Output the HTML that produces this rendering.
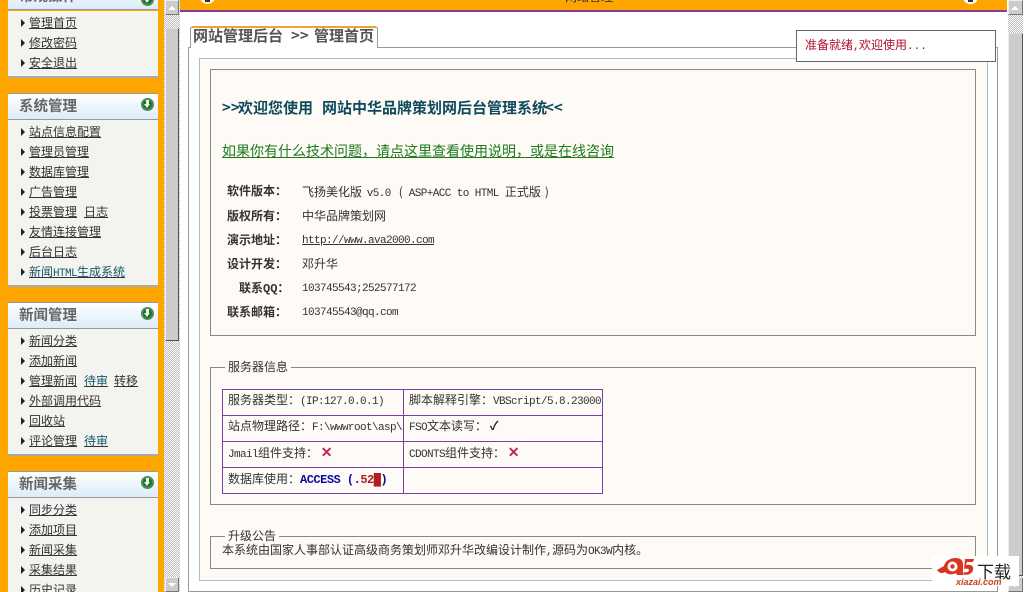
<!DOCTYPE html>
<html><head><meta charset="utf-8"><style>
*{box-sizing:border-box}
html,body{margin:0;padding:0;width:1024px;height:592px;overflow:hidden;background:#fff}
body{position:relative;font:12px/14px "WenQuanYi Zen Hei","Noto Sans CJK SC",sans-serif;color:#333}
.a{position:absolute;white-space:nowrap}
.box{position:absolute}
.h{position:absolute;left:8px;width:150px;height:27px;background:linear-gradient(#fff,#dcecf8);border:1px solid #999;border-width:1px 0 1px 0;font-size:14.5px;font-weight:bold;color:#666;padding:4px 0 0 11px;line-height:16px}
.p{position:absolute;left:8px;width:150px;background:#f3f3ef;border-bottom:2px solid #aaa}
.i{position:absolute;left:29px;text-decoration:underline;color:#333;white-space:nowrap;font-size:12px}
.i b{font-weight:normal;color:#135a6a}
.t{position:absolute;left:21px;width:0;height:0;border-left:4px solid #222;border-top:4px solid transparent;border-bottom:4px solid transparent}
.g{position:absolute;left:141px;width:13px;height:13px;border-radius:50%;background:#1f6f2a;border:2px solid #4f8a58}
.g:before{content:"";position:absolute;left:3px;top:0;width:3px;height:4px;background:#e4f7de}
.g:after{content:"";position:absolute;left:1px;top:4px;width:0;height:0;border-left:3.5px solid transparent;border-right:3.5px solid transparent;border-top:4px solid #e4f7de}
.dith{position:absolute;background-color:#fff;background-image:repeating-conic-gradient(#bbb 0 25%,#fff 0 50%);background-size:2px 2px}
.thumb{position:absolute;background:#ccc;border:1px solid #555;border-top-color:#ddd;border-left-color:#eee}
.btn{position:absolute;background:#ccc;border:1px solid #777;border-top-color:#eee;border-left-color:#eee}
.btn i{position:absolute;left:2px;width:0;height:0;border-left:4px solid transparent;border-right:4px solid transparent}
.l{font-weight:bold;color:#333}
.m{font-family:"Liberation Mono",monospace;font-size:11px;letter-spacing:-.6px}
.mono{font-family:"Liberation Mono","WenQuanYi Zen Hei",monospace;font-size:11px;letter-spacing:-.6px}
td{border:1px solid #7a3fa8;padding:0 0 3px 5px;height:26px;white-space:nowrap;overflow:hidden;font-size:12px;color:#333}
</style></head><body>
<div class="box" style="left:0;top:0;width:164px;height:592px;background:#ffa500"></div>
<div class="box" style="left:179px;top:0;width:828px;height:10px;background:#ffa500"></div>
<div class="box" style="left:179px;top:10px;width:828px;height:2px;background:#8a3a9a"></div>
<div class="box" style="left:200px;top:-9px;width:15px;height:13px;border-radius:50%;background:#fff6cc"></div>
<div class="box" style="left:205px;top:-2px;width:5px;height:4px;background:#333"></div>
<div class="box" style="left:963px;top:-9px;width:15px;height:13px;border-radius:50%;background:#fff"></div>
<div class="box" style="left:968px;top:-2px;width:5px;height:4px;background:#333"></div>
<div class="a" style="left:565px;top:-10px;color:#333">网站管理</div>

<div class="dith" style="left:164px;top:0;width:16px;height:592px"></div>
<div class="btn" style="left:165px;top:0;width:14px;height:15px"><i style="top:5px;border-bottom:4px solid #fff"></i></div>
<div class="thumb" style="left:165px;top:28px;width:14px;height:313px"></div>
<div class="btn" style="left:165px;top:577px;width:14px;height:15px"><i style="top:5px;border-top:4px solid #fff"></i></div>

<div class="dith" style="left:1008px;top:0;width:15px;height:592px"></div>
<div class="btn" style="left:1008px;top:0;width:15px;height:15px"><i style="top:5px;border-bottom:4px solid #fff"></i></div>
<div class="thumb" style="left:1008px;top:33px;width:15px;height:543px"></div>
<div class="btn" style="left:1008px;top:577px;width:15px;height:15px"><i style="top:5px;border-top:4px solid #fff"></i></div>

<!-- sidebar -->
<div class="h" style="top:-17px">常规操作</div><div class="g" style="top:-7px"></div>
<div class="p" style="top:11px;height:67px"></div>
<div class="t" style="top:19px"></div><a class="i" style="top:16px">管理首页</a>
<div class="t" style="top:39px"></div><a class="i" style="top:36px">修改密码</a>
<div class="t" style="top:59px"></div><a class="i" style="top:56px">安全退出</a>

<div class="h" style="top:93px">系统管理</div><div class="g" style="top:98px"></div>
<div class="p" style="top:120px;height:167px"></div>
<div class="t" style="top:128px"></div><a class="i" style="top:125px">站点信息配置</a>
<div class="t" style="top:148px"></div><a class="i" style="top:145px">管理员管理</a>
<div class="t" style="top:168px"></div><a class="i" style="top:165px">数据库管理</a>
<div class="t" style="top:188px"></div><a class="i" style="top:185px">广告管理</a>
<div class="t" style="top:208px"></div><a class="i" style="top:205px">投票管理</a><a class="i" style="top:205px;left:84px">日志</a>
<div class="t" style="top:228px"></div><a class="i" style="top:225px">友情连接管理</a>
<div class="t" style="top:248px"></div><a class="i" style="top:245px">后台日志</a>
<div class="t" style="top:268px"></div><a class="i" style="top:265px"><b>新闻<span class="m">HTML</span>生成系统</b></a>

<div class="h" style="top:302px">新闻管理</div><div class="g" style="top:307px"></div>
<div class="p" style="top:329px;height:127px"></div>
<div class="t" style="top:337px"></div><a class="i" style="top:334px">新闻分类</a>
<div class="t" style="top:357px"></div><a class="i" style="top:354px">添加新闻</a>
<div class="t" style="top:377px"></div><a class="i" style="top:374px">管理新闻</a><a class="i" style="top:374px;left:84px"><b>待审</b></a><a class="i" style="top:374px;left:114px">转移</a>
<div class="t" style="top:397px"></div><a class="i" style="top:394px">外部调用代码</a>
<div class="t" style="top:417px"></div><a class="i" style="top:414px">回收站</a>
<div class="t" style="top:437px"></div><a class="i" style="top:434px">评论管理</a><a class="i" style="top:434px;left:84px"><b>待审</b></a>

<div class="h" style="top:471px">新闻采集</div><div class="g" style="top:476px"></div>
<div class="p" style="top:498px;height:94px;border-bottom:0"></div>
<div class="t" style="top:506px"></div><a class="i" style="top:503px">同步分类</a>
<div class="t" style="top:526px"></div><a class="i" style="top:523px">添加项目</a>
<div class="t" style="top:546px"></div><a class="i" style="top:543px">新闻采集</a>
<div class="t" style="top:566px"></div><a class="i" style="top:563px">采集结果</a>
<div class="t" style="top:586px"></div><a class="i" style="top:583px">历史记录</a>

<!-- content frames -->
<div class="box" style="left:188px;top:47px;width:810px;height:545px;border:1px solid #999;background:#fff"></div>
<div class="box" style="left:190px;top:26px;width:188px;height:22px;background:#fff;border:1px solid #999;border-bottom:0;border-top:2px solid #e8a33c;border-radius:3px 3px 0 0"></div>
<div class="a" style="left:193px;top:28px;font-size:15px;line-height:16px;font-weight:bold;color:#555">网站管理后台</div>
<div class="a" style="left:291px;top:28px;font-size:15px;line-height:16px;font-weight:bold;color:#555">&gt;&gt;</div>
<div class="a" style="left:314px;top:28px;font-size:15px;line-height:16px;font-weight:bold;color:#555">管理首页</div>
<div class="box" style="left:199px;top:58px;width:789px;height:523px;border:1px solid #a5c4bd;background:#fefaf6"></div>
<div class="box" style="left:210px;top:69px;width:766px;height:267px;border:1px solid #888"></div>

<div class="a" style="left:222px;top:100px;font-size:15px;line-height:16px;font-weight:bold;color:#0f4a5c">&gt;&gt;</div>
<div class="a" style="left:238px;top:100px;font-size:15px;line-height:16px;font-weight:bold;color:#0f4a5c">欢迎您使用</div>
<div class="a" style="left:322px;top:100px;font-size:15px;line-height:16px;font-weight:bold;color:#0f4a5c">网站中华品牌策划网后台管理系统</div>
<div class="a" style="left:545px;top:100px;font-size:15px;line-height:16px;font-weight:bold;color:#0f4a5c">&lt;&lt;</div>
<div class="a" style="left:222px;top:143px;font-size:14px;line-height:16px;color:#1d7a1d;text-decoration:underline">如果你有什么技术问题，请点这里查看使用说明，或是在线咨询</div>

<div class="a l" style="left:227px;top:184px">软件版本：</div>
<div class="a" style="left:302px;top:185px">飞扬美化版 <span class="m" style="margin-left:2px">v5.0</span><span style="margin-left:8px">(</span><span class="m" style="margin-left:6px">ASP+ACC to HTML</span><span style="margin-left:6px">正式版</span><span style="margin-left:4px">)</span></div>
<div class="a l" style="left:227px;top:209px">版权所有：</div>
<div class="a" style="left:302px;top:209px">中华品牌策划网</div>
<div class="a l" style="left:227px;top:233px">演示地址：</div>
<div class="a mono" style="left:302px;top:234px;text-decoration:underline">http://www.ava2000.com</div>
<div class="a l" style="left:227px;top:257px">设计开发：</div>
<div class="a" style="left:302px;top:257px">邓升华</div>
<div class="a l" style="left:239px;top:281px">联系<span class="m" style="font-weight:bold;font-size:12px;letter-spacing:0">QQ</span>：</div>
<div class="a mono" style="left:302px;top:282px">103745543;252577172</div>
<div class="a l" style="left:227px;top:305px">联系邮箱：</div>
<div class="a mono" style="left:302px;top:306px">103745543@qq.com</div>

<div class="box" style="left:210px;top:367px;width:766px;height:138px;border:1px solid #888"></div>
<div class="a" style="left:225px;top:360px;background:#fefaf6;padding:0 3px">服务器信息</div>
<table style="position:absolute;left:222px;top:389px;width:381px;height:105px;border-collapse:collapse;table-layout:fixed;background:#fefaf6">
<tr><td style="width:181px">服务器类型：<span class="mono">(IP:127.0.0.1)</span></td><td>脚本解释引擎：<span class="mono">VBScript/5.8.23000</span></td></tr>
<tr><td>站点物理路径：<span class="mono">F:\wwwroot\asp\</span></td><td><span class="m">FSO</span>文本读写： <b style="color:#222">✓</b></td></tr>
<tr><td><span class="m">Jmail</span>组件支持： <b style="color:#c0245a;font-size:14px">✕</b></td><td><span class="m">CDONTS</span>组件支持： <b style="color:#c0245a;font-size:14px">✕</b></td></tr>
<tr><td>数据库使用：<b style="color:#0a0aa0;font:bold 12px 'Liberation Mono',monospace;letter-spacing:-.5px">ACCESS (.<span style="color:#b02020">52█</span>)</b></td><td></td></tr>
</table>

<div class="box" style="left:210px;top:536px;width:766px;height:33px;border:1px solid #888"></div>
<div class="a" style="left:225px;top:529px;background:#fefaf6;padding:0 3px;height:13px">升级公告</div>
<div class="a" style="left:222px;top:543px">本系统由国家人事部认证高级商务策划师邓升华改编设计制作<span class="m">,</span>源码为<span class="m">OK3W</span>内核。</div>

<!-- popup -->
<div class="box" style="left:796px;top:30px;width:200px;height:32px;background:#fff;border:1px solid #666;color:#b01030;padding:7px 0 0 8px;white-space:nowrap">准备就绪<span class="m">,</span>欢迎使用<span class="m" style="letter-spacing:0">...</span></div>

<!-- logo -->
<div class="box" style="left:932px;top:556px;width:87px;height:30px;background:#fff"></div>
<svg class="box" style="left:936px;top:556px" width="40" height="24" viewBox="0 0 40 24"><path d="M1 14 8 10C9 5 14 2 20 2c4 0 7 2 7 6v11h-6l-1-2c-3 2-8 2-11-1-3 2-6 1-8-2z" fill="#d9351f"/><circle cx="16.500" cy="10.500" r="5" fill="#fff"/><circle cx="16.500" cy="10.500" r="2.200" fill="#d9351f"/><path d="M29 3h9l-1 3h-6l-1 3c5-1 8 1 7 5-1 4-6 6-10 4l1-2c2 1 5 0 5-2 0-1-2-2-5-1z" fill="#d9351f"/></svg>
<div class="a" style="left:977px;top:562px;font-size:17px;line-height:18px;color:#222">下载</div>
<div class="a" style="left:956px;top:577px;font:bold 9px/10px 'Liberation Sans',sans-serif;color:#c8401f;font-style:italic">xiazai.com</div>
</body></html>
